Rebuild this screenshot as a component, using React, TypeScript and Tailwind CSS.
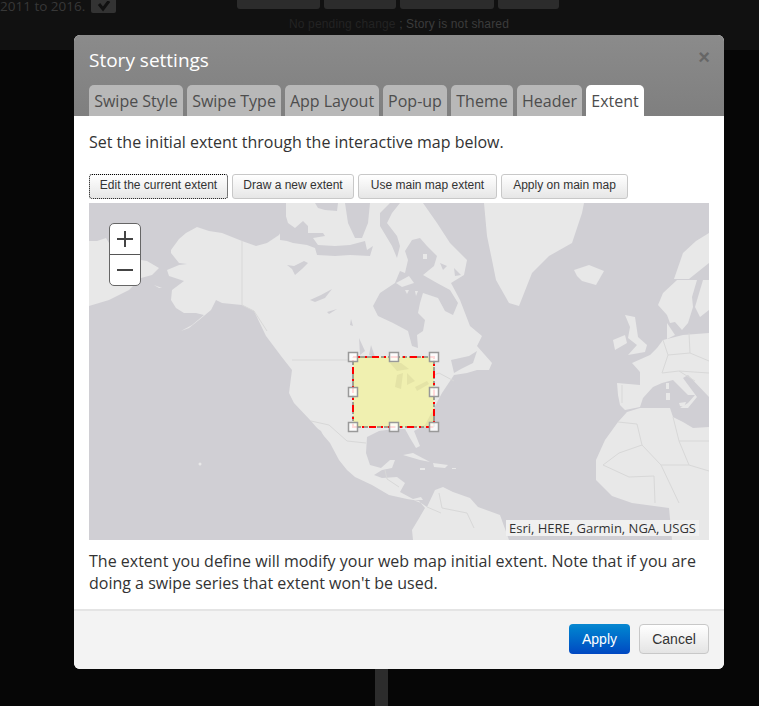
import React from "react";

const TABS = [
  { label: "Swipe Style", width: "w-[94px]" },
  { label: "Swipe Type", width: "w-[94px]" },
  { label: "App Layout", width: "w-[94px]" },
  { label: "Pop-up", width: "w-[64px]" },
  { label: "Theme", width: "w-[62px]" },
  { label: "Header", width: "w-[65px]" },
];

const TOOLS = [
  { label: "Edit the current extent", width: "w-[139px]", focused: true },
  { label: "Draw a new extent", width: "w-[122px]" },
  { label: "Use main map extent", width: "w-[139px]" },
  { label: "Apply on main map", width: "w-[127px]" },
];

// land outlines, traced roughly from the basemap
const LAND = [
  // russia, far east
  "0,38 8,38 17,35 20,40 35,46 52,57 58,58 70,65 63,72 52,75 40,87 20,97 0,103",
  "65,82 73,85 70,85",
  // north america, channels are cut out below
  "82,47 90,36 97,30 108,24 120,28 133,30 153,38 167,43 178,40 190,32 197,20 197,0 334,0 348,20 361,40 378,57 375,72 362,80 371,97 381,123 393,133 388,143 403,160 400,167 388,167 378,170 365,172 353,190 345,205 336,222 325,228 331,243 327,245 321,235 316,226 305,226 290,228 278,234 277,250 281,262 292,265 301,257 306,257 303,265 293,267 285,272 293,275 308,274 316,280 311,289 324,296 332,294 334,297 324,297 332,300 338,304 346,287 354,284 364,289 381,295 389,304 411,312 420,337 324,337 323,327 329,317 336,305 330,298 318,296 300,292 283,282 266,274 258,267 250,257 241,240 222,218 205,200 200,190 203,167 192,153 177,133 165,108 153,102 133,100 127,97 122,107 110,117 100,125 92,128 103,122 115,112 107,110 95,110 87,105 82,97 83,87 95,78 80,73 78,67 90,62 98,61 90,60 82,50",
  // greenland
  "395,0 398,33 403,57 407,77 420,100 430,103 443,70 460,53 483,40 493,10 495,0",
  // iceland
  "485,67 500,62 515,68 507,82 493,78 488,73",
  // britain and ireland
  "536,112 546,114 549,134 558,142 556,149 539,152 548,142 539,135 541,124",
  "524,137 536,132 538,140 526,147",
  // scandinavia and finland
  "569,102 574,90 588,77 608,77 603,94 604,104 599,120 593,127 586,119 581,120 578,112",
  "594,50 607,38 620,30 620,60 600,76 585,76",
  "614,77 620,77 620,107 611,114 606,104",
  // denmark
  "578,120 586,132 578,136",
  // europe, biscay and the med cut the outline
  "620,130 594,132 586,134 574,137 568,145 561,152 543,160 551,169 551,182 528,180 529,192 531,202 536,207 551,204 554,195 564,184 573,180 584,177 599,192 606,192 599,200 591,205 599,205 608,194 594,175 599,172 620,194",
  // africa
  "507,257 516,237 529,219 538,209 551,205 581,205 584,214 594,219 604,225 620,224 620,337 583,337 580,305 543,300 523,293 507,277",
  // caribbean
  "314,252 324,250 341,259 331,257",
  "344,260 359,262 356,265 345,264",
  "331,265 336,265 336,267 331,267",
  "363,265 367,265 367,266 363,266",
  // med islands
  "577,180 580,180 580,186 577,186",
  "577,190 581,190 581,197 577,197",
  "590,200 597,199 595,204 591,203",
];

// channels, bays and lakes, same colour as the sea
const WATER = [
  "191,13 196,10 199,20 206,25 214,18 219,23 219,30 234,30 236,33 224,35 229,42 246,43 261,42 276,38 278,47 284,43 281,53 261,52 246,53 228,52 226,45 218,42 204,40 198,38 191,37",
  "226,0 249,0 248,8 236,7 229,5",
  "256,0 281,0 279,20 273,35 266,35 259,20",
  "291,10 301,0 311,0 303,10 298,20 308,33 311,43 308,55 303,43 291,23",
  "323,37 331,35 338,43 348,53 345,63 334,72 348,80 361,87 369,100 364,112 356,108 349,95 334,90 331,100 329,110 336,117 334,128 328,132 329,145 323,143 319,128 304,120 289,113 284,103 291,90 306,80 311,68 316,70 319,57 316,48",
  "351,60 358,63 354,67",
  "365,65 372,72 366,73",
  "198,62 205,63 215,58 219,60 213,66 206,72 203,66",
  "221,97 232,92 243,86 236,95 226,99",
  "238,109 248,106 240,111",
  "262,116 264,123 261,122",
  "270,135 276,148 271,152",
  "282,142 286,154 280,152",
  "301,160 312,160 320,166 308,168",
  "308,172 314,170 312,186 306,184",
  "318,170 326,178 318,182",
  "326,184 338,178 340,181 328,188",
  "362,157 380,153 388,148 384,160 372,166 365,170",
  "226,224 232,228 243,250 237,248 228,234",
];

// small bits of land inside hudson bay and similar
const ISLANDS = [
  "307,80 320,73 325,80 313,84",
  "316,87 320,87 318,91",
  "326,88 329,88 327,93",
  "334,51 338,51 338,56 334,56",
];

const BORDERS = [
  "153,38 153,102 165,108 178,128",
  "203,157 264,157",
  "345,172 350,170 365,178",
  "222,218 240,222 258,238 277,240",
  "296,267 298,276 310,284",
  "529,219 548,221 553,242 572,262 590,300",
  "553,242 530,250 514,262 540,274 565,273",
  "584,214 590,238 620,238",
  "590,238 600,262 620,268",
  "572,262 600,262",
  "565,273 566,300",
  "350,290 353,305 378,310 385,325",
  "338,304 352,310",
  "600,130 601,150 620,158",
  "574,137 579,152 601,150",
  "579,152 573,170 590,168 620,170",
  "590,168 606,178",
  "533,182 533,200",
];

function MapArt() {
  const handles = [
    [264, 154],
    [305, 154],
    [345, 154],
    [264, 189],
    [345, 189],
    [264, 224],
    [305, 224],
    [345, 224],
  ];
  return (
    <svg width="620" height="337" viewBox="0 0 620 337" className="block">
      <rect width="620" height="337" fill="#d0cfd4" />
      {LAND.map((p, i) => (
        <polygon key={i} points={p} fill="#e8e8e8" />
      ))}
      {WATER.map((p, i) => (
        <polygon key={i} points={p} fill="#d0cfd4" />
      ))}
      {ISLANDS.map((p, i) => (
        <polygon key={i} points={p} fill="#e8e8e8" />
      ))}
      {BORDERS.map((p, i) => (
        <polyline key={i} points={p} fill="none" stroke="#d8d8d8" strokeWidth="1" />
      ))}
      <circle cx="111" cy="261" r="1.5" fill="#e8e8e8" />
      <rect x="264" y="154" width="81" height="70" fill="#f8f878" fillOpacity="0.5" />
      <rect x="264" y="154" width="81" height="70" fill="none" stroke="#555555" strokeWidth="1" strokeDasharray="5 2" />
      <rect x="264" y="154" width="81" height="70" fill="none" stroke="#ff0000" strokeWidth="2" strokeDasharray="7 5 2 5" />
      {handles.map(([x, y], i) => (
        <rect key={i} x={x - 4.5} y={y - 4.5} width="9" height="9" fill="#ffffff" fillOpacity="0.85" stroke="#999999" strokeWidth="1.5" />
      ))}
    </svg>
  );
}

function ToolButton({ label, width, focused }: { label: string; width: string; focused?: boolean }) {
  return (
    <button
      type="button"
      className={`${width} h-[25px] rounded-[3px] bg-gradient-to-b from-[#ffffff] to-[#e6e6e6] pb-[3px] text-center font-['Liberation_Sans',sans-serif] text-[12px] text-[#333333] ${
        focused ? "border border-dotted border-black" : "border border-[#c8c8c8]"
      }`}
    >
      {label}
    </button>
  );
}

export default function App() {
  return (
    <div className="relative h-[706px] w-[759px] overflow-hidden bg-[#060606]">
      {/* page behind the dialog */}
      <div className="h-[50px] bg-[#111111]">
        <div className="flex h-[10px] items-start font-['Open_Sans',sans-serif] text-[13.5px] text-[#383838]">
          <span className="-mt-[4px] w-[91px] whitespace-nowrap leading-[20px]">2011 to 2016.</span>
          <div className="flex h-[13px] w-[25px] items-center justify-center rounded-b-[2px] bg-[#333333]">
            <svg width="14" height="12" viewBox="0 0 14 12">
              <path d="M2 3l4 5 6-8" fill="none" stroke="#111111" strokeWidth="3" />
            </svg>
          </div>
          <div className="ml-[121px] flex gap-1">
            <div className="h-[9px] w-[83px] rounded-b-[3px] bg-[#2c2c2c]" />
            <div className="h-[9px] w-[72px] rounded-b-[3px] bg-[#2c2c2c]" />
            <div className="h-[9px] w-[94px] rounded-b-[3px] bg-[#2c2c2c]" />
            <div className="h-[9px] w-[61px] rounded-b-[3px] bg-[#2c2c2c]" />
          </div>
        </div>
        <p className="mt-[7px] pl-[289px] font-['Liberation_Sans',sans-serif] text-[12px] leading-[14px] tracking-[0.15px] text-[#232323]">
          No pending change <span className="text-[#3c3c3c]">; Story is not shared</span>
        </p>
      </div>
      <div className="absolute left-[375px] top-[660px] h-[46px] w-[13px] bg-[#2c2c2c]" />

      {/* dialog */}
      <div className="absolute left-[74px] top-[35px] flex h-[634px] w-[650px] flex-col overflow-hidden rounded-[6px] bg-white font-['Open_Sans',sans-serif]">
        <div className="h-[81px] bg-gradient-to-b from-[#8b8b8b] to-[#7f7f7f] px-[15px]">
          <div className="flex h-[50px] items-center justify-between">
            <h2 className="text-[19px] leading-[24px] text-white">Story settings</h2>
            <span className="mt-[-7px] mr-[-1px] font-['Liberation_Sans',sans-serif] text-[20px] font-bold leading-[20px] text-[#666666]">×</span>
          </div>
          <div className="flex gap-1">
            {TABS.map((t) => (
              <div
                key={t.label}
                className={`${t.width} flex h-[31px] items-center justify-center rounded-t-[5px] bg-[#b8b8b8] text-[16px] whitespace-nowrap text-[#4d4d4d]`}
              >
                {t.label}
              </div>
            ))}
            <div className="flex h-[31px] w-[58px] items-center justify-center rounded-t-[5px] bg-white text-[16px] text-[#4d4d4d]">
              Extent
            </div>
          </div>
        </div>

        <div className="flex-1 px-[15px]">
          <p className="mt-[15px] text-[16px] leading-[22px] text-[#333333]">
            Set the initial extent through the interactive map below.
          </p>
          <div className="mt-[21px] flex gap-1">
            {TOOLS.map((b) => (
              <ToolButton key={b.label} {...b} />
            ))}
          </div>
          <div className="relative mt-1 h-[337px] w-[620px]">
            <MapArt />
            <div className="absolute left-[20px] top-[20px] flex w-[32px] flex-col overflow-hidden rounded-[5px] border border-[#666666] bg-white">
              <div className="flex h-[31px] items-center justify-center border-b border-[#555555] pb-[1px]">
                <svg width="16" height="16" viewBox="0 0 16 16">
                  <path d="M0 8h16M8 0v16" stroke="#444444" strokeWidth="2" />
                </svg>
              </div>
              <div className="flex h-[30px] items-center justify-center pb-[1px]">
                <svg width="16" height="16" viewBox="0 0 16 16">
                  <path d="M0 8h16" stroke="#444444" strokeWidth="2" />
                </svg>
              </div>
            </div>
            <span className="absolute right-[10px] bottom-[4px] bg-[#f0f0f0] px-[3px] text-[13px] leading-[16px] text-[#333333]">
              Esri, HERE, Garmin, NGA, USGS
            </span>
          </div>
          <p className="mt-[10px] text-[16px] leading-[22px] text-[#333333]">
            The extent you define will modify your web map initial extent. Note that if you are doing a swipe series that extent won't be used.
          </p>
        </div>

        <div className="flex h-[60px] items-start justify-end gap-[9px] border-t-2 border-[#e4e4e4] bg-[#f3f3f3] pt-[13px] pr-[15px] font-['Liberation_Sans',sans-serif] text-[14px]">
          <button type="button" className="h-[30px] w-[61px] rounded-[4px] bg-gradient-to-b from-[#0a88d0] to-[#0047c2] text-white">
            Apply
          </button>
          <button type="button" className="h-[30px] w-[70px] rounded-[4px] border border-[#c8c8c8] bg-gradient-to-b from-[#ffffff] to-[#e4e4e4] text-[#333333]">
            Cancel
          </button>
        </div>
      </div>
    </div>
  );
}
